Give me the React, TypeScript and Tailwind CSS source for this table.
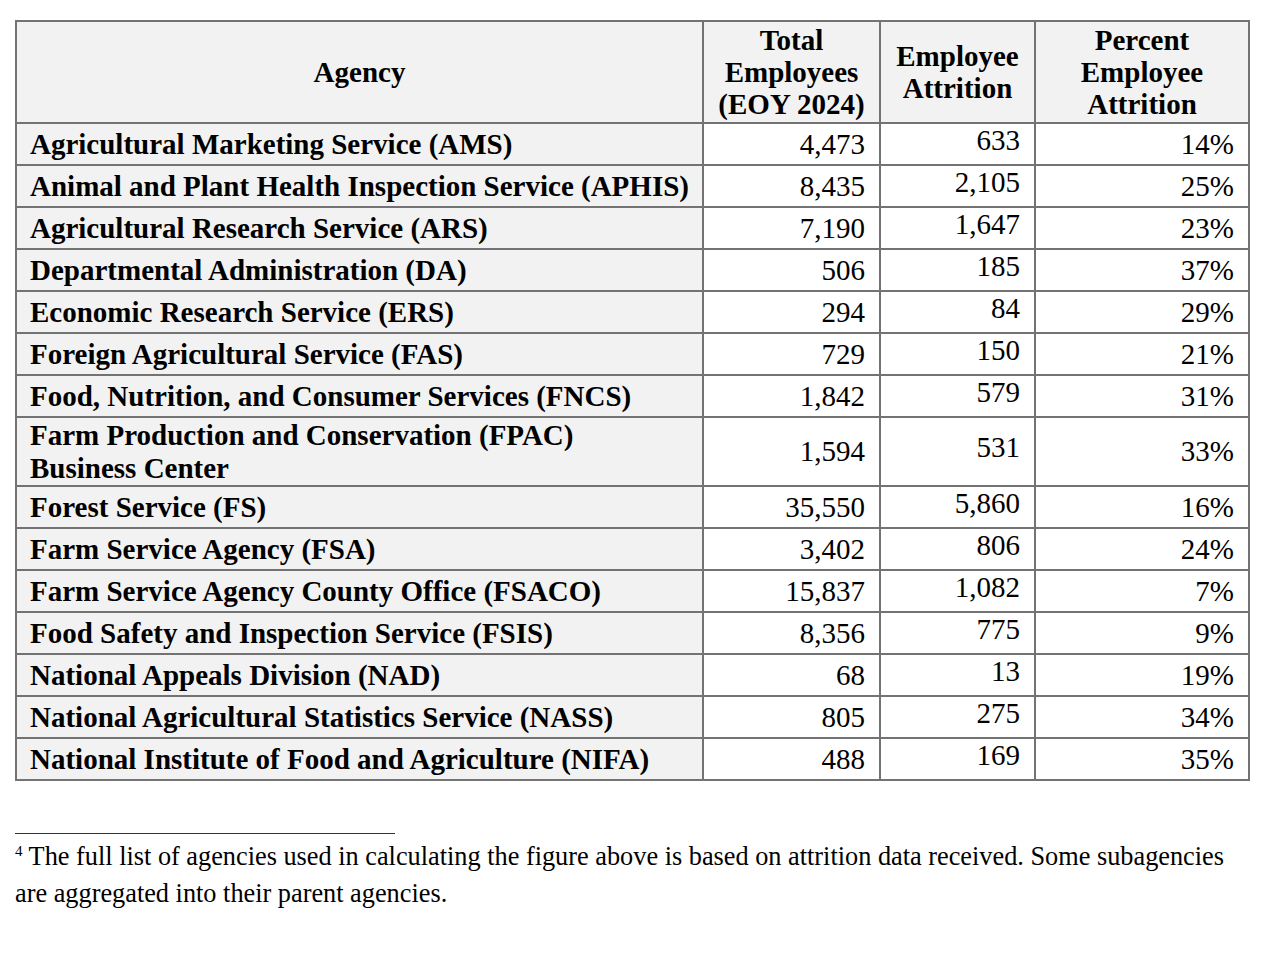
const rows: { name: string[]; total: string; attr: string; pct: string }[] = [
  { name: ["Agricultural Marketing Service (AMS)"], total: "4,473", attr: "633", pct: "14%" },
  { name: ["Animal and Plant Health Inspection Service (APHIS)"], total: "8,435", attr: "2,105", pct: "25%" },
  { name: ["Agricultural Research Service (ARS)"], total: "7,190", attr: "1,647", pct: "23%" },
  { name: ["Departmental Administration (DA)"], total: "506", attr: "185", pct: "37%" },
  { name: ["Economic Research Service (ERS)"], total: "294", attr: "84", pct: "29%" },
  { name: ["Foreign Agricultural Service (FAS)"], total: "729", attr: "150", pct: "21%" },
  { name: ["Food, Nutrition, and Consumer Services (FNCS)"], total: "1,842", attr: "579", pct: "31%" },
  { name: ["Farm Production and Conservation (FPAC)", "Business Center"], total: "1,594", attr: "531", pct: "33%" },
  { name: ["Forest Service (FS)"], total: "35,550", attr: "5,860", pct: "16%" },
  { name: ["Farm Service Agency (FSA)"], total: "3,402", attr: "806", pct: "24%" },
  { name: ["Farm Service Agency County Office (FSACO)"], total: "15,837", attr: "1,082", pct: "7%" },
  { name: ["Food Safety and Inspection Service (FSIS)"], total: "8,356", attr: "775", pct: "9%" },
  { name: ["National Appeals Division (NAD)"], total: "68", attr: "13", pct: "19%" },
  { name: ["National Agricultural Statistics Service (NASS)"], total: "805", attr: "275", pct: "34%" },
  { name: ["National Institute of Food and Agriculture (NIFA)"], total: "488", attr: "169", pct: "35%" },
];

export default function App() {
  return (
    <div className="min-h-[953px] w-[1284px] bg-white text-black [font-family:'Liberation_Serif','Times_New_Roman',serif]">
      <div className="pl-[15px] pt-[20px]">
        <table className="table-fixed border-collapse text-[29px] leading-[33px]">
          <colgroup>
            <col className="w-[687px]" />
            <col className="w-[177px]" />
            <col className="w-[155px]" />
            <col className="w-[214px]" />
          </colgroup>
          <thead>
            <tr className="h-[102px] bg-[#f2f2f2] font-bold leading-[32px]">
              <th className="border-2 border-[#737373] text-center align-middle">Agency</th>
              <th className="border-2 border-[#737373] text-center align-middle">
                Total
                <br />
                Employees
                <br />
                (EOY 2024)
              </th>
              <th className="border-2 border-[#737373] text-center align-middle">
                Employee
                <br />
                Attrition
              </th>
              <th className="border-2 border-[#737373] text-center align-middle">
                Percent
                <br />
                Employee
                <br />
                Attrition
              </th>
            </tr>
          </thead>
          <tbody>
            {rows.map((r) => (
              <tr key={r.name[0]} className={r.name.length > 1 ? "h-[69px]" : "h-[42px]"}>
                <td className="border-2 border-[#737373] bg-[#f2f2f2] p-0 pl-[13px] font-bold align-middle">
                  {r.name.map((n) => (
                    <div key={n}>{n}</div>
                  ))}
                </td>
                <td className="border-2 border-[#737373] p-0 pr-[14px] text-right align-middle">{r.total}</td>
                <td className="border-2 border-[#737373] p-0 pr-[14px] text-right align-middle">
                  <span className="relative -top-[4px]">{r.attr}</span>
                </td>
                <td className="border-2 border-[#737373] p-0 pr-[14px] text-right align-middle">{r.pct}</td>
              </tr>
            ))}
          </tbody>
        </table>
      </div>
      <div className="ml-[15px] mt-[52px] h-[1px] w-[380px] bg-[#333]" />
      <p className="ml-[15px] mt-[4px] w-[1245px] text-[26.3px] leading-[37px]">
        <span className="relative -top-[9px] text-[15px] leading-none">4</span>{" "}
        The full list of agencies used in calculating the figure above is based on attrition data received. Some subagencies are aggregated into their parent agencies.
      </p>
    </div>
  );
}
